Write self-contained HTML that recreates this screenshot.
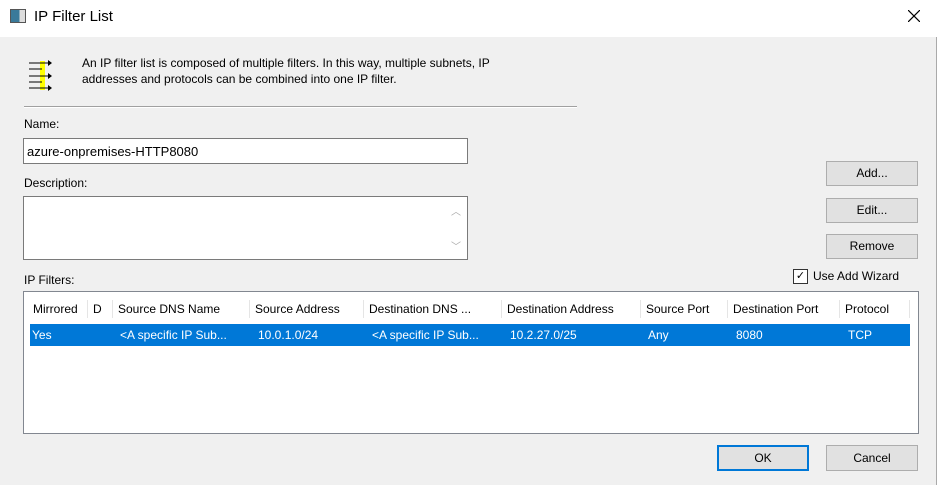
<!DOCTYPE html><html><head><style>
body{margin:0;width:937px;height:485px;background:#fff;font-family:"Liberation Sans",sans-serif;font-size:12px;color:#000;position:relative;overflow:hidden}
.a{position:absolute}
.body{left:0;top:37px;width:936px;height:448px;background:#f0f0f0;border-right:1px solid #aaa}
.in{background:#fff;border:1px solid #7a7a7a;box-sizing:border-box}
.btn{background:#e1e1e1;border:1px solid #adadad;box-sizing:border-box;text-align:center;line-height:23px}
.hd{top:300px;height:18px;line-height:18px;border-right:1px solid #e5e5e5;padding-left:5px;box-sizing:border-box}
.cell{top:325px;line-height:20px;color:#fff;padding-left:4px}
</style></head><body>
<div class="a" style="left:10px;top:9px;width:14px;height:12px;border:1px solid #555;background:linear-gradient(90deg,#3a7a9a 0 60%,#ddd 60%)"></div>
<div class="a" style="left:34px;top:8px;font-size:15px">IP Filter List</div>
<svg class="a" style="left:908px;top:10px" width="12" height="12"><path d="M0 0L12 12M12 0L0 12" stroke="#000" stroke-width="1.2"/></svg>
<div class="a body"></div>
<svg class="a" style="left:27px;top:59px" width="28" height="32"><rect x="13" y="2" width="5" height="29" fill="#ff0"/><g stroke="#000" fill="none"><path d="M2 4h20M2 17h20M2 29h20M2 10h13M2 23h13"/></g><path d="M21 1l4 3-4 3zM21 14l4 3-4 3zM21 26l4 3-4 3z"/></svg>
<div class="a" style="left:82px;top:55px;line-height:16px">An IP filter list is composed of multiple filters. In this way, multiple subnets, IP<br>addresses and protocols can be combined into one IP filter.</div>
<div class="a" style="left:24px;top:106px;width:553px;height:1px;background:#a0a0a0;border-bottom:1px solid #fff"></div>
<div class="a" style="left:24px;top:117px">Name:</div>
<div class="a in" style="left:23px;top:138px;width:445px;height:26px;padding:5px 3px;font-size:13px">azure-onpremises-HTTP8080</div>
<div class="a" style="left:24px;top:176px">Description:</div>
<div class="a in" style="left:23px;top:196px;width:445px;height:64px"><div class="a" style="right:6px;top:6px;color:#aaa;font-size:10px">︿</div><div class="a" style="right:6px;bottom:6px;color:#aaa;font-size:10px">﹀</div></div>
<div class="a btn" style="left:826px;top:161px;width:92px;height:25px">Add...</div>
<div class="a btn" style="left:826px;top:198px;width:92px;height:25px">Edit...</div>
<div class="a btn" style="left:826px;top:234px;width:92px;height:25px">Remove</div>
<div class="a" style="left:793px;top:269px;width:13px;height:13px;border:1px solid #333;background:#fff;font-size:11px;line-height:13px;text-align:center">✓</div>
<div class="a" style="left:813px;top:269px">Use Add Wizard</div>
<div class="a" style="left:24px;top:273px">IP Filters:</div>
<div class="a in" style="left:23px;top:291px;width:896px;height:143px;border-color:#828790"></div>
<div class="a" style="left:30px;top:324px;width:880px;height:22px;background:#0078d7"></div>
<div class="a hd" style="left:28px;width:60px">Mirrored</div>
<div class="a hd" style="left:88px;width:25px">D</div>
<div class="a hd" style="left:113px;width:137px">Source DNS Name</div>
<div class="a hd" style="left:250px;width:114px">Source Address</div>
<div class="a hd" style="left:364px;width:138px">Destination DNS ...</div>
<div class="a hd" style="left:502px;width:139px">Destination Address</div>
<div class="a hd" style="left:641px;width:87px">Source Port</div>
<div class="a hd" style="left:728px;width:112px">Destination Port</div>
<div class="a hd" style="left:840px;width:70px">Protocol</div>
<div class="a cell" style="left:28px">Yes</div>
<div class="a cell" style="left:116px">&lt;A specific IP Sub...</div>
<div class="a cell" style="left:254px">10.0.1.0/24</div>
<div class="a cell" style="left:368px">&lt;A specific IP Sub...</div>
<div class="a cell" style="left:506px">10.2.27.0/25</div>
<div class="a cell" style="left:644px">Any</div>
<div class="a cell" style="left:732px">8080</div>
<div class="a cell" style="left:844px">TCP</div>
<div class="a btn" style="left:717px;top:445px;width:92px;height:26px;border:2px solid #0078d7;line-height:22px">OK</div>
<div class="a btn" style="left:826px;top:445px;width:92px;height:26px;line-height:25px">Cancel</div>
</body></html>
